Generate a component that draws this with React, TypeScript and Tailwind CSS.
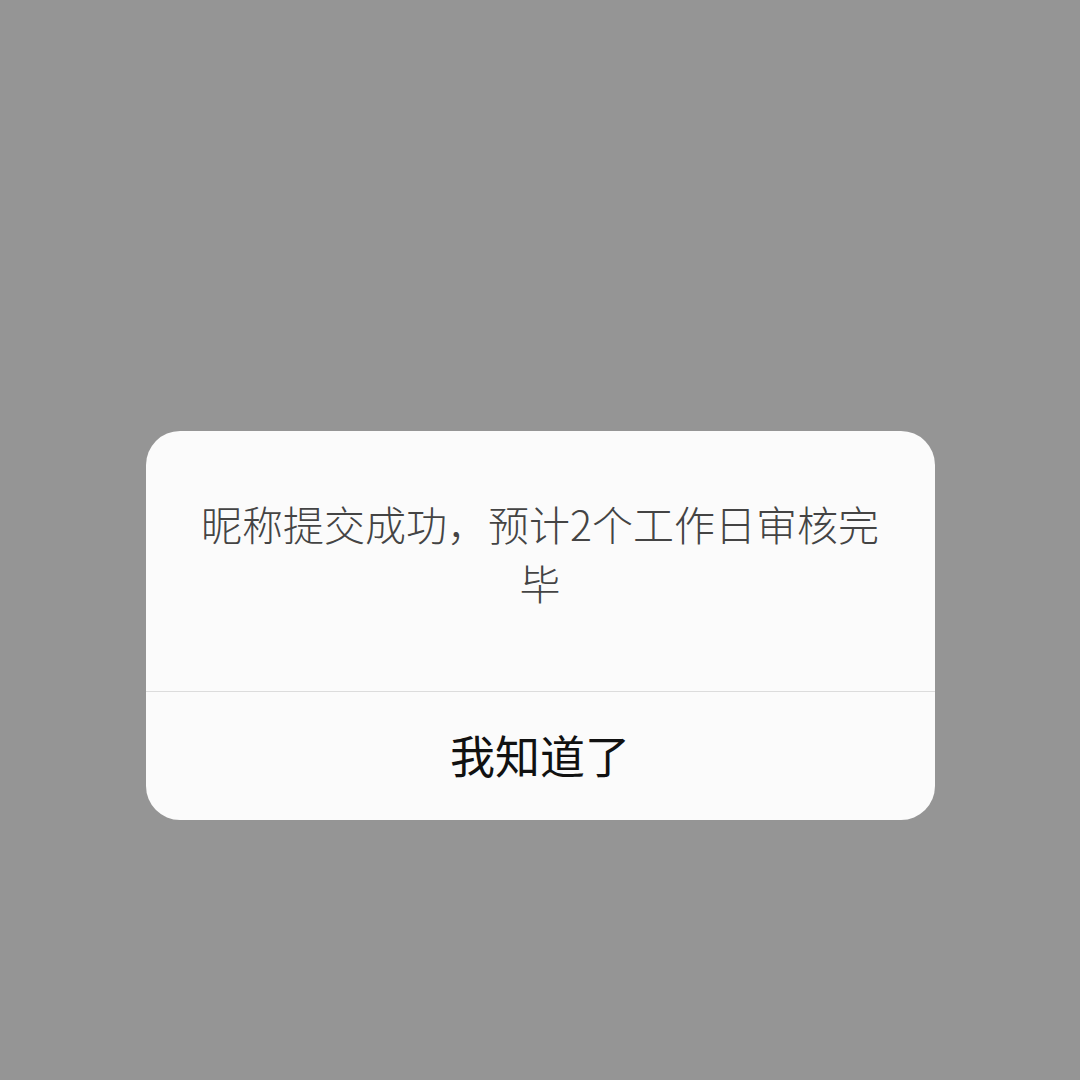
import React from "react";

export default function App() {
  return (
    <div
      className="w-[1080px] h-[1080px] bg-[#959595] pt-[431px] flex flex-col items-center"
      style={{ fontFamily: '"Noto Sans CJK SC", "Noto Sans", sans-serif' }}
    >
      <div className="w-[789px] bg-[#fbfbfb] rounded-[34px] overflow-hidden flex flex-col">
        <div className="h-[260px] px-[54px] pt-[63px] text-center text-[41px] leading-[59px] font-light text-[#444444]">
          昵称提交成功，预计2个工作日审核完毕
        </div>
        <div className="h-px bg-[#dcdcdc]" />
        <div className="h-[128px] flex items-center justify-center pb-[2px] text-[45px] font-normal text-[#111111]">
          我知道了
        </div>
      </div>
    </div>
  );
}
